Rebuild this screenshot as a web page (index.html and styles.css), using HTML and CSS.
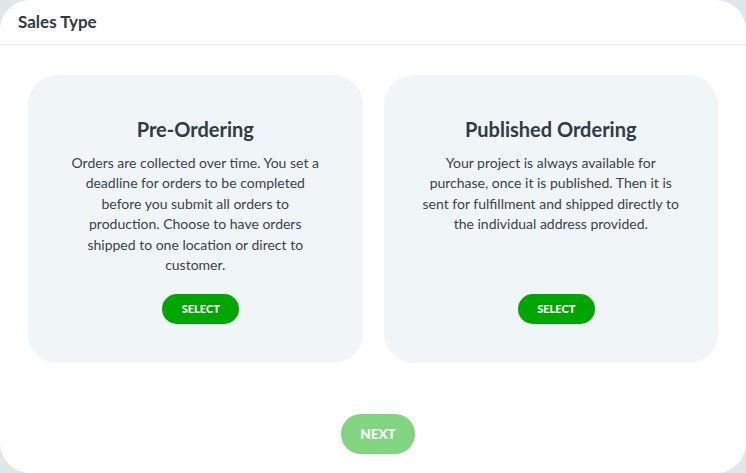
FILE: index.html
```html
<!DOCTYPE html>
<html>
  <head>
    <title>Sales Type</title>
    <link rel="stylesheet" href="styles.css">
  </head>
  <body>
    <div class="modal">
      <div class="modal_header">Sales Type</div>
      <div class="modal_body">
        <div class="option">
          <h2 class="option_title">Pre-Ordering</h2>
          <p class="option_text">Orders are collected over time. You set a deadline for orders to be completed before you submit all orders to production. Choose to have orders shipped to one location or direct to customer.</p>
          <button class="select_btn">SELECT</button>
        </div>
        <div class="option">
          <h2 class="option_title">Published Ordering</h2>
          <p class="option_text">Your project is always available for purchase, once it is published. Then it is sent for fulfillment and shipped directly to the individual address provided.</p>
          <button class="select_btn">SELECT</button>
        </div>
      </div>
      <div class="modal_footer">
        <button class="next_btn">NEXT</button>
      </div>
    </div>
  </body>
</html>
```

FILE: styles.css
```css
html, body{
  margin:0;
  height:100%;
}
body{
  background:#dfe7eb;
  font-family:Lato, "Liberation Sans", sans-serif;
  color:#333d45;
}
.modal{
  height:473px;
  box-sizing:border-box;
  background:#fff;
  border-radius:30px;
  display:flex;
  flex-direction:column;
}
.modal_header{
  height:45px;
  box-sizing:border-box;
  padding:11px 18px 0;
  font-size:17px;
  font-weight:bold;
  color:#2f3b45;
  border-bottom:1px solid #e8eaeb;
}
.modal_body{
  display:flex;
  gap:21px;
  padding:30px 28px 0;
}
.option{
  flex:1;
  height:288px;
  box-sizing:border-box;
  background:#f0f5f8;
  border-radius:30px;
  padding:43px 37px 39px;
  display:flex;
  flex-direction:column;
  align-items:center;
  text-align:center;
}
.option_title{
  margin:0;
  font-size:20px;
  line-height:22px;
  color:#2f3b45;
}
.option_text{
  margin:13px 0 0;
  font-size:14px;
  line-height:20.4px;
  color:#3a434a;
}
.select_btn{
  margin-top:auto;
  margin-left:11px;
  width:77px;
  height:30px;
  padding-bottom:2px;
  background:#00a600;
  color:#fff;
  border:none;
  border-radius:15px;
  font-family:inherit;
  font-size:11px;
  font-weight:900;
  cursor:pointer;
}
.modal_footer{
  display:flex;
  justify-content:center;
  padding-top:51px;
}
.next_btn{
  margin-left:10px;
  width:74px;
  height:40px;
  background:#81d581;
  color:#fff;
  border:none;
  border-radius:20px;
  font-family:inherit;
  font-size:13.5px;
  font-weight:900;
}
```
